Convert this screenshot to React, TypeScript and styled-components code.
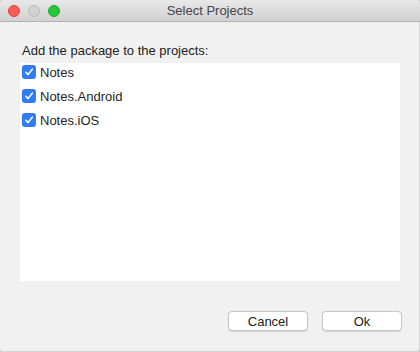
import styled, { createGlobalStyle } from 'styled-components'

const GlobalStyle = createGlobalStyle`
  html, body {
    margin: 0;
    padding: 0;
    background: #c9c9c9;
  }
  body {
    font-family: 'Liberation Sans', Arial, sans-serif;
    -webkit-font-smoothing: antialiased;
  }
`

const Window = styled.div`
  width: 420px;
  height: 352px;
  box-sizing: border-box;
  background: #f1f1f1;
  border-radius: 4px;
  overflow: hidden;
  display: flex;
  flex-direction: column;
  box-shadow: inset -1px -1px 0 0 #d6d6d6;
`

const TitleBar = styled.div`
  height: 21px;
  flex: none;
  position: relative;
  display: flex;
  align-items: center;
  justify-content: center;
  background: linear-gradient(#e9e8e9, #d2d1d2);
  border-bottom: 1px solid #b3b3b3;
`

const Lights = styled.div`
  position: absolute;
  left: 8px;
  top: 5px;
  display: flex;
  gap: 8px;
`

const Light = styled.span<{ $color: string; $edge: string }>`
  width: 12px;
  height: 12px;
  box-sizing: border-box;
  border-radius: 50%;
  background: ${(p) => p.$color};
  border: 0.5px solid ${(p) => p.$edge};
`

const Title = styled.div`
  font-size: 13px;
  color: #454545;
`

const Body = styled.div`
  flex: 1;
  display: flex;
  flex-direction: column;
  padding: 21px 20px 20px 20px;
`

const Label = styled.div`
  font-size: 13px;
  color: #222;
  padding-left: 2px;
  line-height: 16px;
`

const List = styled.div`
  margin-top: 4px;
  height: 218px;
  background: #ffffff;
  display: flex;
  flex-direction: column;
  gap: 10px;
  padding: 2px 0 0 2px;
  box-sizing: border-box;
`

const Row = styled.label`
  display: flex;
  align-items: center;
  gap: 4px;
  height: 14px;
  font-size: 13px;
  color: #1e1e1e;
`

const Box = styled.span`
  width: 14px;
  height: 14px;
  border-radius: 3px;
  background: #2f7cf6;
  display: flex;
  align-items: center;
  justify-content: center;
`

const Footer = styled.div`
  margin-top: 30px;
  display: flex;
  justify-content: flex-end;
  gap: 14px;
  margin-right: -2px;
`

const Button = styled.button`
  width: 80px;
  height: 20px;
  padding: 0;
  background: #ffffff;
  border: 1px solid #c6c6c6;
  border-radius: 4px;
  box-shadow: 0 0.5px 1px rgba(0, 0, 0, 0.12);
  font-family: inherit;
  font-size: 13px;
  color: #222;
`

const Check = () => (
  <svg width="10" height="10" viewBox="0 0 10 10">
    <path
      d="M1.8 5.3 L4 7.6 L8.3 2.2"
      fill="none"
      stroke="#fff"
      strokeWidth="1.6"
      strokeLinecap="round"
      strokeLinejoin="round"
    />
  </svg>
)

const projects = ['Notes', 'Notes.Android', 'Notes.iOS']

const App = () => {
  return (
    <>
      <GlobalStyle />
      <Window>
        <TitleBar>
          <Lights>
            <Light $color="#fd5b56" $edge="#e0443e" />
            <Light $color="#d3d2d3" $edge="#b9b9b9" />
            <Light $color="#26c73c" $edge="#1aab29" />
          </Lights>
          <Title>Select Projects</Title>
        </TitleBar>
        <Body>
          <Label>Add the package to the projects:</Label>
          <List>
            {projects.map((p) => (
              <Row key={p}>
                <Box>
                  <Check />
                </Box>
                {p}
              </Row>
            ))}
          </List>
          <Footer>
            <Button>Cancel</Button>
            <Button>Ok</Button>
          </Footer>
        </Body>
      </Window>
    </>
  )
}

export default App
